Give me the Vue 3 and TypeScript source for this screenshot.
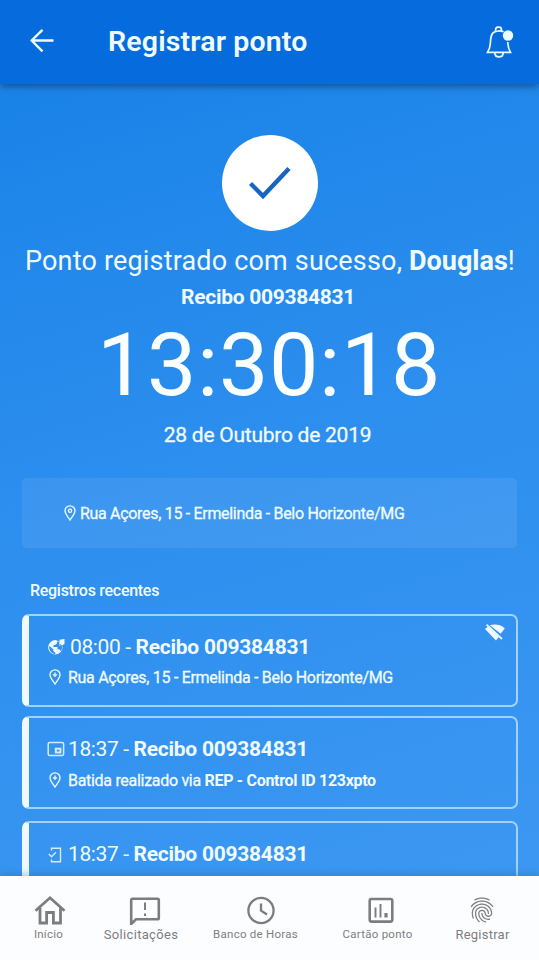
<script setup lang="ts">
interface RecordItem {
  kind: 'globe' | 'device' | 'phone'
  time: string
  receipt: string
  place?: string
  source?: string
  offline?: boolean
}

interface NavItem {
  id: string
  label: string
}

const records: RecordItem[] = [
  { kind: 'globe', time: '08:00', receipt: 'Recibo 009384831', place: 'Rua Açores, 15 - Ermelinda - Belo Horizonte/MG', offline: true },
  { kind: 'device', time: '18:37', receipt: 'Recibo 009384831', place: 'Batida realizado via ', source: 'REP - Control ID 123xpto' },
  { kind: 'phone', time: '18:37', receipt: 'Recibo 009384831' },
]

const nav: NavItem[] = [
  { id: 'home', label: 'Início' },
  { id: 'requests', label: 'Solicitações' },
  { id: 'hours', label: 'Banco de Horas' },
  { id: 'timesheet', label: 'Cartão ponto' },
  { id: 'register', label: 'Registrar' },
]
</script>

<template>
  <div class="screen">
    <header class="bar">
      <svg class="back" viewBox="0 0 24 24" fill="none" stroke="currentColor" stroke-width="2.4">
        <path d="M23.500 11.500H1.500M12.500 0.800L1.600 11.500L12.500 22.400" />
      </svg>
      <h1 class="title">Registrar ponto</h1>
      <svg class="bell" viewBox="0 0 28 34" fill="none" stroke="currentColor" stroke-width="1.700">
        <path d="M9.600 6.200V4.600Q9.600 2.200 12 2.200H13Q15.400 2.200 15.400 4.600V6.200" />
        <path d="M17.500 6.800C15 5.600 10 5.600 7.500 7.500C4.500 10 4.600 13.500 4.400 18C4.200 22 3.300 24.500 1.500 27.400H24.500C22.700 24.500 22 22 21.700 17" />
        <path d="M8.800 27.600C9 33.400 17 33.400 17.200 27.600" />
        <circle cx="22" cy="10.500" r="5.200" fill="currentColor" stroke="none" />
      </svg>
    </header>

    <main class="content">
      <div class="badge">
        <svg viewBox="0 0 42 34" fill="none" stroke="#1765c0" stroke-width="4.400">
          <path d="M1.500 17.500L14 30L40 2.500" />
        </svg>
      </div>
      <p class="success">Ponto registrado com sucesso, <b>Douglas</b>!</p>
      <p class="receipt">Recibo 009384831</p>
      <p class="clock">13:30:18</p>
      <p class="date">28 de Outubro de 2019</p>

      <div class="address">
        <svg class="pin" viewBox="0 0 12 16" fill="none" stroke="currentColor" stroke-width="1.300">
          <path d="M6 15C3.500 11.500 1 8.800 1 5.800A5 5 0 0 1 11 5.800C11 8.800 8.500 11.500 6 15Z" />
          <circle cx="6" cy="5.800" r="1.600" />
        </svg>
        <span>Rua Açores, 15 - Ermelinda - Belo Horizonte/MG</span>
      </div>

      <h2 class="section">Registros recentes</h2>

      <div class="list">
        <article v-for="(item, index) in records" :key="index" class="card" :class="item.kind">
          <div class="line">
            <svg v-if="item.kind === 'globe'" class="kind" viewBox="0 0 18 18">
              <path fill="currentColor" d="M9.500 2.200A7.200 7.200 0 1 0 15.500 8.500L12.500 7V4Z" />
              <path fill="#3191ee" d="M2.300 7.800L6.300 11.400V13L8.300 14.800V16.300C4.500 15.800 1.800 12.500 2.300 7.800ZM10 3.500V5.500L8 7H6.500V9H10.500V11.300H12.300L13.800 13C15 11.500 15.300 9.800 14.800 8L12 7.500V4Z" />
              <path fill="currentColor" d="M12.500 1.800L17.500 1V6L15 7.500L12.500 5.500Z" />
            </svg>
            <svg v-else-if="item.kind === 'device'" class="kind" viewBox="0 0 18 18" fill="none" stroke="currentColor" opacity="0.850">
              <rect x="1.200" y="2.600" width="15.400" height="13" rx="1.500" stroke-width="1.500" />
              <rect x="8.800" y="8.700" width="4.600" height="3.800" stroke-width="2" />
            </svg>
            <svg v-else class="kind" viewBox="0 0 18 18" fill="none" stroke="currentColor" stroke-width="1.400" opacity="0.850">
              <path d="M4.500 5.500V3.200H13.500V16.800H4.500V14.500" />
              <path d="M1.800 9L4.500 11.700L9 7.200" />
            </svg>
            <span class="time">{{ item.time }} - <b>{{ item.receipt }}</b></span>
          </div>
          <div v-if="item.place" class="place">
            <svg class="pin" viewBox="0 0 12 16" fill="none" stroke="currentColor" stroke-width="1.300">
              <path d="M6 15C3.500 11.500 1 8.800 1 5.800A5 5 0 0 1 11 5.800C11 8.800 8.500 11.500 6 15Z" />
              <path d="M6 3.500V8M3.800 5.800H8.200" />
            </svg>
            <span>{{ item.place }}<b v-if="item.source">{{ item.source }}</b></span>
          </div>
          <svg v-if="item.offline" class="offline" viewBox="0 0 20 18">
            <path fill="currentColor" d="M4.800 2.300C9 1 15 1 19.800 5.300L15.700 10.800Z" />
            <path fill="currentColor" d="M2.800 3.800L13.800 14L11 17.500L0 6Z" />
            <path stroke="currentColor" stroke-width="1.800" d="M1.500 1.700L17 16" />
          </svg>
        </article>
      </div>
    </main>

    <nav class="tabs">
      <a v-for="tab in nav" :key="tab.id" class="tab" :class="tab.id">
        <svg v-if="tab.id === 'home'" class="glyph" viewBox="0 0 32 30" fill="none" stroke="currentColor" stroke-width="2.800">
          <path d="M1.500 15.700L16 2.800L30.500 15.700" />
          <path d="M6 13V28H12.600V17.500H19.400V28H26.500V13" />
        </svg>
        <svg v-else-if="tab.id === 'requests'" class="glyph" viewBox="0 0 32 30" fill="none" stroke="currentColor" stroke-width="2.600">
          <path d="M2.200 29V5Q2.200 3.700 3.500 3.700H28.500Q29.800 3.700 29.800 5V23Q29.800 24.300 28.500 24.300H7Z" />
          <path d="M16 7.500V15M16 18.500V21" stroke-width="2" />
        </svg>
        <svg v-else-if="tab.id === 'hours'" class="glyph" viewBox="0 0 32 30" fill="none" stroke="currentColor" stroke-width="2.300">
          <circle cx="16" cy="15.500" r="12.600" />
          <path d="M16 8.500V15.700L22 19.500" />
        </svg>
        <svg v-else-if="tab.id === 'timesheet'" class="glyph" viewBox="0 0 32 30" fill="none" stroke="currentColor">
          <rect x="4.700" y="4" width="22.600" height="22.600" rx="1.800" stroke-width="2.600" />
          <path d="M10.500 12.500V22.500M15.500 9V22.500" stroke-width="1.900" />
          <path d="M21 18V22.500" stroke-width="3.200" />
        </svg>
        <svg v-else class="glyph" viewBox="0 0 24 24" fill="currentColor">
          <path d="M17.810 4.470c-.08 0-.16-.02-.23-.06C15.660 3.420 14 3 12.010 3c-1.980 0-3.860.47-5.570 1.410-.24.13-.54.04-.68-.2-.13-.24-.04-.55.2-.68C7.820 2.520 9.860 2 12.010 2c2.130 0 3.990.47 6.030 1.520.25.13.34.43.21.67-.09.18-.26.28-.44.28zM3.500 9.720c-.1 0-.2-.03-.29-.09-.23-.16-.28-.47-.12-.7.99-1.400 2.250-2.500 3.750-3.270C9.980 4.040 14 4.030 17.150 5.650c1.500.77 2.760 1.860 3.750 3.250.16.22.11.54-.12.7-.23.16-.54.11-.7-.12-.9-1.260-2.040-2.250-3.390-2.940-2.870-1.470-6.540-1.470-9.400.01-1.360.7-2.500 1.700-3.400 2.960-.08.14-.23.21-.39.21zm6.250 12.070c-.13 0-.26-.05-.35-.15-.87-.87-1.340-1.430-2.010-2.640-.69-1.230-1.050-2.730-1.050-4.340 0-2.970 2.540-5.390 5.660-5.390s5.660 2.420 5.660 5.390c0 .28-.22.5-.5.5s-.5-.22-.5-.5c0-2.420-2.090-4.390-4.660-4.390-2.570 0-4.660 1.970-4.660 4.390 0 1.440.32 2.770.93 3.850.64 1.150 1.080 1.640 1.850 2.420.19.2.19.51 0 .71-.11.1-.24.15-.37.15zm7.170-1.850c-1.190 0-2.240-.3-3.100-.89-1.490-1.010-2.380-2.650-2.380-4.390 0-.28.22-.5.5-.5s.5.22.5.5c0 1.410.72 2.740 1.940 3.560.71.48 1.540.71 2.540.71.24 0 .64-.03 1.040-.1.27-.05.53.13.58.41.05.27-.13.53-.41.58-.57.11-1.070.12-1.210.12zM14.910 22c-.04 0-.09-.01-.13-.02-1.590-.44-2.630-1.030-3.720-2.100-1.400-1.390-2.170-3.240-2.170-5.220 0-1.620 1.380-2.940 3.080-2.940 1.700 0 3.080 1.320 3.080 2.940 0 1.070.93 1.940 2.080 1.940s2.080-.87 2.080-1.940c0-3.770-3.250-6.830-7.250-6.830-2.840 0-5.440 1.580-6.610 4.030-.39.81-.59 1.760-.59 2.800 0 .78.07 2.010.67 3.610.1.26-.03.55-.29.64-.26.1-.55-.04-.64-.29-.49-1.310-.73-2.610-.73-3.960 0-1.200.23-2.290.68-3.240 1.330-2.790 4.280-4.600 7.510-4.600 4.550 0 8.250 3.510 8.250 7.830 0 1.620-1.380 2.940-3.080 2.940s-3.080-1.320-3.080-2.940c0-1.070-.93-1.940-2.080-1.940s-2.080.87-2.080 1.940c0 1.710.66 3.310 1.870 4.510.95.94 1.860 1.460 3.270 1.850.27.07.42.35.35.61-.05.23-.26.38-.47.38z" />
        </svg>
        <span class="label">{{ tab.label }}</span>
      </a>
    </nav>
  </div>
</template>

<style>
body {
  margin: 0;
}
</style>

<style scoped>
.screen {
  display: flex;
  flex-direction: column;
  height: 960px;
  overflow: hidden;
  color: #f0fbff;
  font-family: Roboto, "Liberation Sans", sans-serif;
  background: linear-gradient(163deg, #1a83e8 8%, #2c8eee 45%, #3d98f2 95%);
}

p,
h1,
h2 {
  margin: 0;
  white-space: nowrap;
}

svg {
  display: block;
  flex: none;
}

.bar {
  display: flex;
  align-items: center;
  flex: none;
  height: 84px;
  box-sizing: border-box;
  padding: 0 25px 0 30px;
  background: #066cdd;
  box-shadow: 0 4px 6px -1px rgba(20, 70, 120, 0.7);
}

.back {
  width: 24px;
  height: 24px;
  margin-top: -3px;
}

.title {
  flex: 1;
  margin: 0 0 0 54px;
  font-size: 28.5px;
  font-weight: 600;
  line-height: 34px;
  letter-spacing: 0.16px;
}

.bell {
  width: 28px;
  height: 34px;
}

.content {
  flex: 1;
  min-height: 0;
  display: flex;
  flex-direction: column;
  align-items: center;
  overflow: hidden;
  margin-top: 10px;
  padding: 41px 21px 0 22px;
}

.badge {
  display: flex;
  align-items: center;
  justify-content: center;
  flex: none;
  width: 96px;
  height: 96px;
  margin-right: 1px;
  border-radius: 50%;
  background: #fff;
}

.badge svg {
  width: 42px;
  height: 34px;
}

.success {
  flex: none;
  margin-top: 14px;
  font-size: 27px;
  line-height: 32px;
  letter-spacing: 0.18px;
}

.success b {
  letter-spacing: 0;
}

.receipt {
  flex: none;
  margin: 8px 4px 0 0;
  font-size: 21px;
  font-weight: 700;
  line-height: 24px;
  letter-spacing: -0.3px;
}

.clock {
  flex: none;
  margin: 6px 2px 0 0;
  color: #fcffff;
  font-size: 88px;
  line-height: 100px;
  letter-spacing: 0.6px;
}

.date {
  flex: none;
  margin: 8px 5px 0 0;
  font-size: 21px;
  line-height: 24px;
  letter-spacing: -0.25px;
  -webkit-text-stroke: 0.3px currentColor;
}

.address {
  display: flex;
  align-items: center;
  gap: 4px;
  flex: none;
  align-self: stretch;
  height: 70px;
  margin: 31px 1px 0 0;
  padding-left: 42px;
  border-radius: 5px;
  background: rgba(255, 255, 255, 0.08);
  font-size: 16px;
  letter-spacing: -0.31px;
  -webkit-text-stroke: 0.3px currentColor;
}

.pin {
  width: 12px;
  height: 16px;
}

.section {
  flex: none;
  align-self: flex-start;
  margin: 33px 0 0 8px;
  font-size: 16px;
  font-weight: 500;
  line-height: 20px;
  letter-spacing: -0.28px;
}

.list {
  display: flex;
  flex-direction: column;
  gap: 9px;
  align-self: stretch;
  margin-top: 13px;
}

.card {
  position: relative;
  flex: none;
  box-sizing: border-box;
  height: 93px;
  padding: 19px 0 0 18px;
  border: 2px solid #9fd3fc;
  border-left: 7px solid #eefaff;
  border-radius: 7px;
}

.card:last-child {
  margin-top: 3px;
}

.line {
  display: flex;
  align-items: center;
  gap: 5px;
  height: 24px;
}

.device .line,
.phone .line {
  gap: 3px;
}

.kind {
  width: 18px;
  height: 18px;
}

.time {
  font-size: 21px;
  letter-spacing: -0.37px;
  white-space: nowrap;
}

.time b {
  letter-spacing: -0.26px;
}

.place {
  display: flex;
  align-items: center;
  gap: 7px;
  height: 20px;
  margin-top: 8px;
  padding-left: 2px;
  font-size: 16px;
  letter-spacing: -0.3px;
  white-space: pre;
  -webkit-text-stroke: 0.3px currentColor;
}

.device .place {
  margin-top: 9px;
}

.place b {
  -webkit-text-stroke: 0;
}

.offline {
  position: absolute;
  top: 7px;
  right: 11px;
  width: 20px;
  height: 18px;
}

.tabs {
  position: relative;
  display: grid;
  grid-template-columns: 97px 88px 141px 103px 107px;
  flex: none;
  height: 84px;
  background: #fcfdff;
  box-shadow: 0 -1px 8px rgba(40, 90, 140, 0.4);
}

.tab {
  display: flex;
  flex-direction: column;
  align-items: center;
  padding-top: 19px;
  color: #7c7d80;
}

.glyph {
  width: 32px;
  height: 30px;
}

.home .glyph { margin-left: 3px; }
.requests .glyph { margin-left: 8px; }
.hours .glyph { margin-left: 11px; }
.timesheet .glyph { margin-left: 7px; }
.register .glyph { margin-right: 2px; }

.label {
  font-size: 11.5px;
  line-height: 18px;
  letter-spacing: 0.25px;
  white-space: nowrap;
}

.requests .label {
  font-size: 13px;
  line-height: 20px;
  letter-spacing: 0.33px;
}

.register .label {
  font-size: 13px;
  line-height: 20px;
  letter-spacing: 0.25px;
}
</style>
